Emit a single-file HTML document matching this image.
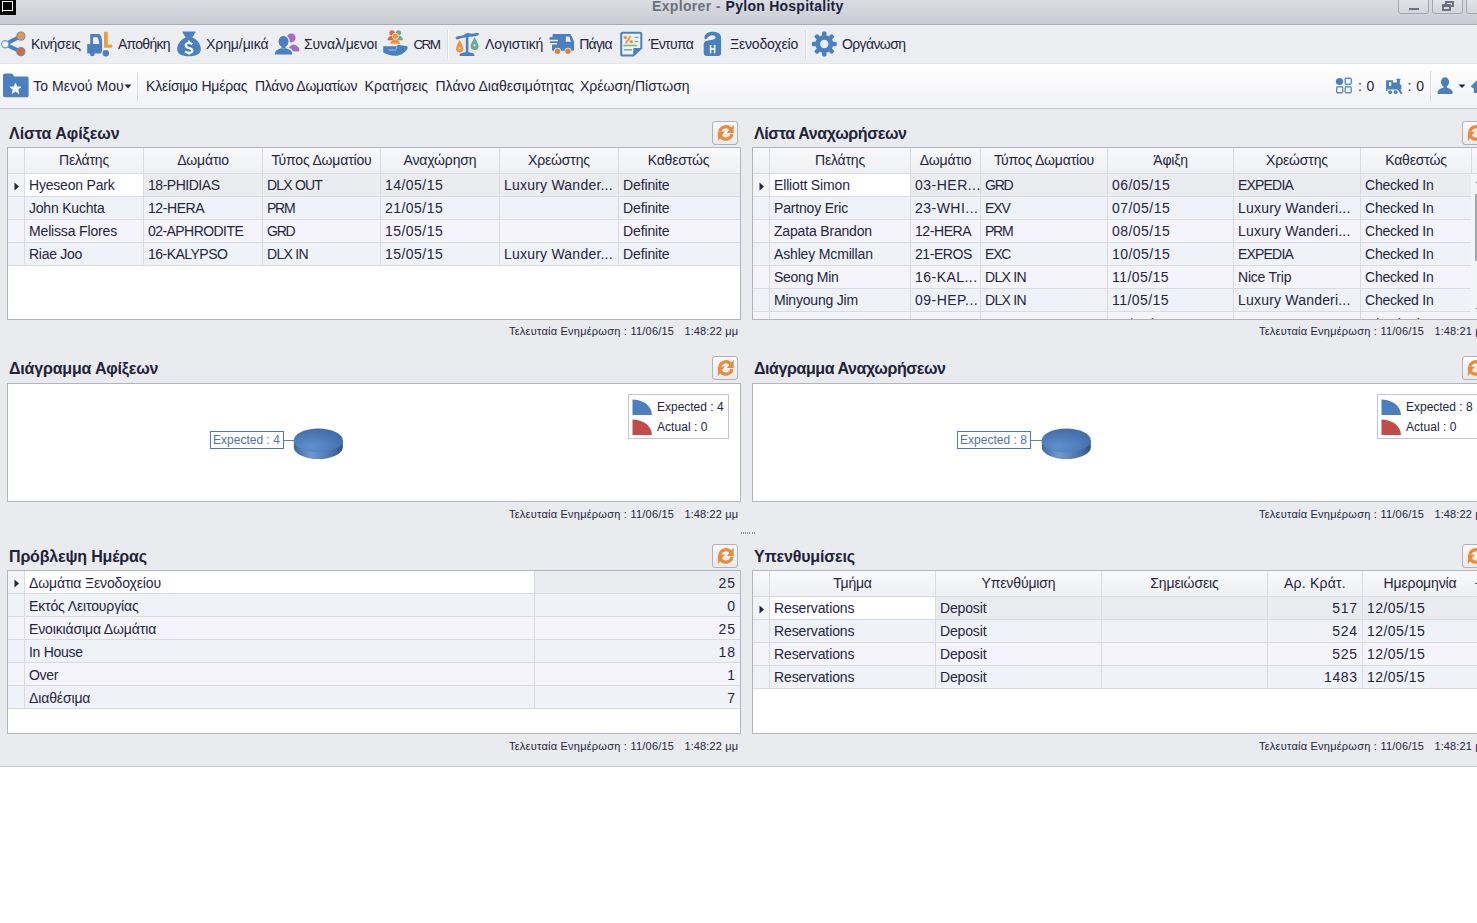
<!DOCTYPE html><html><head><meta charset="utf-8"><style>
html,body{margin:0;padding:0;width:1477px;height:923px;overflow:hidden;background:#ffffff;}
body{position:relative;font-family:"Liberation Sans", sans-serif;}
div,span,svg{position:absolute;}
.t{white-space:nowrap;}
</style></head><body>
<div style="left:0px;top:109px;width:1477px;height:657px;background:#eaebef;"></div>
<div style="left:0px;top:766px;width:1477px;height:1px;background:#c6c8ce;"></div>
<div style="left:0px;top:0px;width:1477px;height:24px;background:linear-gradient(#dadce2,#caccd3);"></div>
<div style="left:0px;top:24px;width:1477px;height:1px;background:#a9acb5;"></div>
<div style="left:0px;top:0px;width:16px;height:15px;background:#000;"></div>
<div style="left:2px;top:1px;width:9px;height:8px;border:1px solid #f4f4f4;"></div>
<div style="left:2px;top:11px;width:1px;height:1px;background:#f4f4f4;"></div>
<span class="t" style="left:652px;top:-0.85px;font-size:14px;line-height:14px;font-weight:700;color:#6d7080;letter-spacing:0.338px;">Explorer -</span>
<span class="t" style="left:725.6px;top:-0.85px;font-size:14px;line-height:14px;font-weight:700;color:#202040;letter-spacing:0.258px;">Pylon Hospitality</span>
<div style="left:1398px;top:-3px;width:31px;height:17px;box-sizing:border-box;border:1px solid #a3a6ae;border-radius:3px;background:linear-gradient(#e6e7eb,#d3d5da);"></div>
<div style="left:1432px;top:-3px;width:31px;height:17px;box-sizing:border-box;border:1px solid #a3a6ae;border-radius:3px;background:linear-gradient(#e6e7eb,#d3d5da);"></div>
<div style="left:1466px;top:-3px;width:31px;height:17px;box-sizing:border-box;border:1px solid #a3a6ae;border-radius:3px;background:linear-gradient(#e6e7eb,#d3d5da);"></div>
<div style="left:1409px;top:8px;width:10px;height:2px;background:#6c6f7c;"></div>
<div style="left:1445px;top:1px;width:9px;height:6px;box-sizing:border-box;border:2px solid #6c6f7c;border-top-width:2px;"></div>
<div style="left:1442px;top:4px;width:9px;height:7px;box-sizing:border-box;border:2px solid #6c6f7c;border-top-width:3px;background:#d9dbe1;"></div>
<div style="left:0px;top:25px;width:1477px;height:39px;background:#eceef2;"></div>
<div style="left:0px;top:63px;width:1477px;height:1px;background:#e4e6ea;"></div>
<svg style="left:0px;top:30px;" width="27" height="28" viewBox="0 0 27 28">
<line x1="5.2" y1="14.2" x2="20.9" y2="6.1" stroke="#4a80bf" stroke-width="3.8"/>
<line x1="5.2" y1="14.2" x2="20.9" y2="21.7" stroke="#4a80bf" stroke-width="3.8"/>
<circle cx="5.2" cy="14.2" r="3.6" fill="#f0f2f6" stroke="#6a9bd2" stroke-width="1.1"/>
<circle cx="20.9" cy="6.1" r="4.1" fill="#ef9440" stroke="#5a90cc" stroke-width="1"/>
<circle cx="20.9" cy="21.7" r="4.1" fill="#df653f" stroke="#5a90cc" stroke-width="1"/>
</svg>
<span class="t" style="left:31px;top:37.15px;font-size:14px;line-height:14px;font-weight:400;color:#25253f;letter-spacing:-0.283px;">Κινήσεις</span>
<svg style="left:86px;top:29px;" width="28" height="29" viewBox="0 0 28 29">
<path d="M4.2 6 c0 -0.6 0.4 -1 1 -1 h7 c1 0 1.8 0.5 2.3 1.3 c1 1.8 1.6 4.5 1.6 7.2 v8 l-1 3 h-13.3 c-0.4 0 -0.6 -0.2 -0.6 -0.6 v-8.4 c0 -0.4 0.2 -0.6 0.6 -0.6 h2.4 z" fill="#4a80bf"/>
<path d="M7 8.2 h4.5 c1 1.5 1.6 4 1.7 6.8 h-6.2 z" fill="#eceef2"/>
<circle cx="6.3" cy="25" r="2.3" fill="#4a80bf"/>
<path d="M18 4 c0 -0.7 0.5 -1.2 1.2 -1.2 h1.4 c0.7 0 1.2 0.5 1.2 1.2 v11.5 h3.2 c0.9 0 1.4 0.7 1.4 1.6 c0 0.9 -0.5 1.7 -1.4 1.7 h-6 c-0.6 0 -1 -0.4 -1 -1 z" fill="#f19a45"/>
<circle cx="19.8" cy="24.2" r="3.2" fill="#4a80bf"/>
</svg>
<span class="t" style="left:118px;top:37.15px;font-size:14px;line-height:14px;font-weight:400;color:#25253f;letter-spacing:-0.742px;">Αποθήκη</span>
<svg style="left:175px;top:29px;" width="28" height="29" viewBox="0 0 28 29">
<path d="M7.5 3.2 c-0.4 -0.5 0 -0.8 0.8 -0.8 h11.4 c0.8 0 1.2 0.3 0.8 0.8 l-3.2 5.3 c5 2 8.5 6.5 8.5 11.5 c0 5 -4.3 7.3 -11.8 7.3 c-7.5 0 -11.8 -2.3 -11.8 -7.3 c0 -5 3.5 -9.5 8.5 -11.5 z" fill="#4a80bf"/>
<path d="M17.3 15.3 c-0.8 -0.9 -1.9 -1.3 -3.3 -1.3 c-2 0 -3.3 0.9 -3.3 2.4 c0 1.6 1.5 2.1 3.3 2.5 c1.9 0.4 3.4 0.9 3.4 2.6 c0 1.5 -1.5 2.4 -3.4 2.4 c-1.6 0 -2.9 -0.5 -3.8 -1.4" fill="none" stroke="#fff" stroke-width="2.1"/>
<path d="M14 11.8 v2.4 M14 23.6 v2" stroke="#fff" stroke-width="2"/>
</svg>
<span class="t" style="left:206px;top:37.15px;font-size:14px;line-height:14px;font-weight:400;color:#25253f;letter-spacing:-0.082px;">Χρημ/μικά</span>
<svg style="left:272px;top:29px;" width="30" height="29" viewBox="0 0 30 29">
<circle cx="19.2" cy="8.8" r="4.4" fill="#a46bc4"/>
<path d="M16 22 c0.5 -4 2.5 -6 5.5 -6.5 c3.5 0.8 5.8 3 5.8 5.5 c0 1.2 -0.8 1.5 -2 1.5 z" fill="#a46bc4"/>
<ellipse cx="11.5" cy="12.5" rx="5.6" ry="6.1" fill="#4a80bf" stroke="#eceef2" stroke-width="1.4"/>
<path d="M2 25.5 c0 -4 2.5 -6 7 -7 h5 c4.5 1 7 3 7 7 c0 0.5 -0.3 0.8 -0.8 0.8 h-17.4 c-0.5 0 -0.8 -0.3 -0.8 -0.8 z" fill="#4a80bf" stroke="#eceef2" stroke-width="1.4"/>
<ellipse cx="11.5" cy="12.5" rx="4.8" ry="5.3" fill="#4a80bf"/>
<path d="M9.5 16 h4 v3 h-4 z" fill="#4a80bf"/>
</svg>
<span class="t" style="left:304px;top:37.15px;font-size:14px;line-height:14px;font-weight:400;color:#25253f;letter-spacing:-0.110px;">Συναλ/μενοι</span>
<svg style="left:380px;top:28px;" width="30" height="30" viewBox="0 0 30 30">
<circle cx="12" cy="4.8" r="2.6" fill="#e2653e"/>
<path d="M7.5 12.3 c0 -2.5 1.5 -4.3 4.5 -4.6 c1 0.5 1.5 1.5 1.5 3 v1.6 z" fill="#e2653e"/>
<circle cx="18.5" cy="4.8" r="2.6" fill="#6eaa8c"/>
<path d="M17 12.3 v-1.6 c0 -1.5 0.5 -2.5 1.5 -3 c3 0.3 4.5 2.1 4.5 4.6 z" fill="#6eaa8c"/>
<circle cx="15.3" cy="8.3" r="3.1" fill="#f0953f" stroke="#eceef2" stroke-width="0.8"/>
<path d="M10.5 15.8 c0 -2.5 1.8 -3.8 3.3 -4 h3 c1.5 0.2 3.2 1.5 3.2 4 z" fill="#f0953f"/>
<path d="M3.2 18.2 h12.5 c0.8 0 1.2 -0.3 1.5 -0.7 c0.5 -0.5 1 -0.7 2 -0.6 c2 0.2 4.5 0.6 6.8 1 c1.3 0.3 2 1 1.7 2 c-1 3 -6 7.9 -12.7 7.9 c-4.5 0 -8.5 -1.5 -11.8 -3.3 z" fill="#4a80bf"/>
<path d="M8.5 22 h6 c1.5 0 2.2 -0.8 2.2 -2 v-1.5" fill="none" stroke="#b9cde6" stroke-width="0.9"/>
</svg>
<span class="t" style="left:413.4px;top:37.57px;font-size:13.5px;line-height:13.5px;font-weight:400;color:#25253f;letter-spacing:-1.575px;">CRM</span>
<div style="left:447px;top:30px;width:1px;height:29px;background:#d9dbe0;"></div>
<div style="left:448px;top:30px;width:1px;height:29px;background:#f8f9fb;"></div>
<svg style="left:453px;top:29px;" width="29" height="29" viewBox="0 0 29 29">
<path d="M3 8 c2.5 -1 6 -1.3 8 -2 c1.5 -0.8 2 -2 3.5 -2 c1.5 0 2 0.7 4 0.7 c2.5 0 4.5 -0.7 6.5 -0.7 c1 0 1.2 1.8 0.2 2.2 c-3 1 -6 1.5 -9 1.6 c-4 0.4 -8 1.6 -12 2.6 c-1.3 0.3 -2 -2 -1.2 -2.4 z" fill="#4a80bf"/>
<rect x="12.8" y="7.5" width="2.6" height="17" fill="#4a80bf"/>
<path d="M6.5 26.2 c0 -1.8 3 -3 7.5 -3 c4.5 0 7.5 1.2 7.5 3 c0 0.6 -0.4 0.8 -1 0.8 h-13 c-0.6 0 -1 -0.2 -1 -0.8 z" fill="#4a80bf"/>
<path d="M6.7 10.8 c-1.5 3 -3.7 6.5 -3.7 9 a3.7 3.6 0 0 0 7.4 0 c0 -2.5 -2.2 -6 -3.7 -9 z" fill="#f0953f"/>
<path d="M21.6 8.3 c-1.5 3 -4 6.5 -4 9 a4 3.6 0 0 0 8 0 c0 -2.5 -2.5 -6 -4 -9 z" fill="#6eaa8c"/>
<circle cx="6.6" cy="19.2" r="1.1" fill="#eceef2"/>
<circle cx="21.5" cy="16.3" r="1.1" fill="#eceef2"/>
</svg>
<span class="t" style="left:485px;top:37.15px;font-size:14px;line-height:14px;font-weight:400;color:#25253f;letter-spacing:-0.116px;">Λογιστική</span>
<svg style="left:547px;top:29px;" width="30" height="29" viewBox="0 0 30 29">
<path d="M5.5 6.3 c0 -0.8 0.5 -1.3 1.3 -1.3 h15.5 c0.9 0 1.5 0.4 1.9 1.2 l2.3 5 c0.4 0.9 0.6 1.8 0.6 2.8 v6.5 c0 0.8 -0.4 1.2 -1.2 1.2 h-20.1 c-0.5 0 -0.8 -0.3 -0.8 -0.8 v-5.5 h5 v-1.3 h-6.5 c-0.8 0 -0.8 -1.9 0 -1.9 h7.5 v-1.4 h-8 c-0.9 0 -0.9 -2.5 0 -2.5 h2.5 z" fill="#4a80bf"/>
<path d="M18.8 7.4 h2.6 c0.5 0 0.8 0.2 1 0.6 l1.6 4.8 h-5.2 z" fill="#eceef2"/>
<circle cx="10.5" cy="22.3" r="3.5" fill="#eceef2"/>
<circle cx="21" cy="22.3" r="3.5" fill="#eceef2"/>
<circle cx="10.5" cy="22.3" r="2.7" fill="#d9843c"/>
<circle cx="21" cy="22.3" r="2.7" fill="#d9843c"/>
</svg>
<span class="t" style="left:579.3px;top:37.15px;font-size:14px;line-height:14px;font-weight:400;color:#25253f;letter-spacing:-0.805px;">Πάγια</span>
<svg style="left:617px;top:29px;" width="29" height="29" viewBox="0 0 29 29">
<path d="M4.2 5 c0 -0.8 0.6 -1.2 1.4 -1.2 h17.5 c0.8 0 1.2 0.5 1.2 1.2 v14 l-8 7.6 h-10.7 c-0.8 0 -1.4 -0.5 -1.4 -1.2 z" fill="#eef1f5" stroke="#4a80bf" stroke-width="2"/>
<path d="M16.3 26.6 v-6.3 c0 -0.8 0.5 -1.3 1.3 -1.3 h6.7 z" fill="#4a80bf"/>
<circle cx="8.3" cy="8.5" r="1.8" fill="#f0953f"/>
<circle cx="14.2" cy="12.8" r="1.8" fill="#f0953f"/>
<path d="M13.6 7 l-4.8 7.5" stroke="#f0953f" stroke-width="1.7"/>
<path d="M17.5 8.3 h3.8 M17.5 12.7 h3.8 M6.5 16.5 h13.5" stroke="#7fb39a" stroke-width="1.3"/>
<path d="M7 20.8 h8" stroke="#7fb39a" stroke-width="1.6"/>
</svg>
<span class="t" style="left:648.4px;top:37.15px;font-size:14px;line-height:14px;font-weight:400;color:#25253f;letter-spacing:-0.647px;">Έντυπα</span>
<svg style="left:700px;top:28px;" width="25" height="30" viewBox="0 0 25 30">
<path d="M4.5 10 C4 8 6 3.7 12 3.7 C18 3.5 21.1 6 21.1 10 V25 C21.1 27 20 28 18 28 H7 C5 28 3.7 27 3.7 25 V16.5 C3.7 14 5 13 8 12.5 C12 12 15.5 11.5 15.5 9.5 C15.5 8 14 7.3 12.5 7.3 C10 7.3 8 9 7 10.5 C6 11.8 4.8 11.5 4.5 10 Z" fill="#4a80bf"/>
<path d="M10.6 17 v8.2 M14.6 17 v8.2 M10.6 21 h4" stroke="#fff" stroke-width="1.5"/>
</svg>
<span class="t" style="left:730px;top:37.15px;font-size:14px;line-height:14px;font-weight:400;color:#25253f;letter-spacing:-0.181px;">Ξενοδοχείο</span>
<div style="left:805px;top:30px;width:1px;height:29px;background:#d9dbe0;"></div>
<div style="left:806px;top:30px;width:1px;height:29px;background:#f8f9fb;"></div>
<svg style="left:809px;top:29px;" width="30" height="29" viewBox="0 0 30 29">
<rect x="13.1" y="2.6" width="4.4" height="7" rx="1.3" fill="#4a80bf" transform="rotate(0 15.3 15)"/><rect x="13.1" y="2.6" width="4.4" height="7" rx="1.3" fill="#4a80bf" transform="rotate(45 15.3 15)"/><rect x="13.1" y="2.6" width="4.4" height="7" rx="1.3" fill="#4a80bf" transform="rotate(90 15.3 15)"/><rect x="13.1" y="2.6" width="4.4" height="7" rx="1.3" fill="#4a80bf" transform="rotate(135 15.3 15)"/><rect x="13.1" y="2.6" width="4.4" height="7" rx="1.3" fill="#4a80bf" transform="rotate(180 15.3 15)"/><rect x="13.1" y="2.6" width="4.4" height="7" rx="1.3" fill="#4a80bf" transform="rotate(225 15.3 15)"/><rect x="13.1" y="2.6" width="4.4" height="7" rx="1.3" fill="#4a80bf" transform="rotate(270 15.3 15)"/><rect x="13.1" y="2.6" width="4.4" height="7" rx="1.3" fill="#4a80bf" transform="rotate(315 15.3 15)"/>
<circle cx="15.3" cy="15" r="9" fill="#4a80bf"/>
<circle cx="15.3" cy="15" r="4.2" fill="#eceef2"/>
</svg>
<span class="t" style="left:842px;top:37.15px;font-size:14px;line-height:14px;font-weight:400;color:#25253f;letter-spacing:-0.616px;">Οργάνωση</span>
<div style="left:0px;top:64px;width:1477px;height:44px;background:linear-gradient(#ffffff,#fbfbfc 30%,#f1f2f5);"></div>
<div style="left:0px;top:108px;width:1477px;height:1px;background:#c6c8ce;"></div>
<svg style="left:2px;top:72px;" width="27" height="27" viewBox="0 0 27 27">
<path d="M1 3.5 c0 -1.2 0.8 -2 2 -2 h6 c1 0 1.5 0.5 2 1.2 l1.3 1.8 h12.5 c1 0 1.8 0.8 1.8 1.8 v17.2 c0 1 -0.8 1.8 -1.8 1.8 h-21.8 c-1.2 0 -2 -0.8 -2 -2 z" fill="#4a80bf"/>
<path d="M13.50 11.00 L14.97 14.78 L19.02 15.01 L15.88 17.57 L16.91 21.49 L13.50 19.30 L10.09 21.49 L11.12 17.57 L7.98 15.01 L12.03 14.78 Z" fill="#fff" stroke="#fff" stroke-width="0.6" stroke-linejoin="round"/>
</svg>
<span class="t" style="left:33.2px;top:79.15px;font-size:14px;line-height:14px;font-weight:400;color:#25253f;letter-spacing:0.043px;">Το Μενού Μου</span>
<svg style="left:124px;top:84px;" width="8" height="5" viewBox="0 0 8 5"><path d="M0.5 0.5 h7 l-3.5 4 z" fill="#222238"/></svg>
<div style="left:137px;top:72px;width:1px;height:29px;background:#d9dbe0;"></div>
<div style="left:138px;top:72px;width:1px;height:29px;background:#f8f9fb;"></div>
<span class="t" style="left:146px;top:79.15px;font-size:14px;line-height:14px;font-weight:400;color:#25253f;letter-spacing:-0.200px;">Κλείσιμο Ημέρας</span>
<span class="t" style="left:255px;top:79.15px;font-size:14px;line-height:14px;font-weight:400;color:#25253f;letter-spacing:-0.263px;">Πλάνο Δωματίων</span>
<span class="t" style="left:364.6px;top:79.15px;font-size:14px;line-height:14px;font-weight:400;color:#25253f;letter-spacing:-0.007px;">Κρατήσεις</span>
<span class="t" style="left:435.5px;top:79.15px;font-size:14px;line-height:14px;font-weight:400;color:#25253f;letter-spacing:0.007px;">Πλάνο Διαθεσιμότητας</span>
<span class="t" style="left:580px;top:79.15px;font-size:14px;line-height:14px;font-weight:400;color:#25253f;letter-spacing:0.020px;">Χρέωση/Πίστωση</span>
<svg style="left:1335px;top:77px;" width="18" height="18" viewBox="0 0 18 18">
<circle cx="4.5" cy="4.5" r="3.6" fill="#4a80bf"/>
<rect x="10.2" y="1.2" width="6" height="6" rx="1" fill="none" stroke="#5d8fca" stroke-width="1.4"/>
<rect x="1.7" y="9.7" width="6" height="6" rx="1" fill="none" stroke="#5d8fca" stroke-width="1.4"/>
<rect x="10.2" y="9.7" width="6" height="6" rx="1" fill="none" stroke="#5d8fca" stroke-width="1.4"/>
</svg>
<span class="t" style="left:1358px;top:79.15px;font-size:14px;line-height:14px;font-weight:400;color:#25253f;letter-spacing:0.361px;">: 0</span>
<svg style="left:1382px;top:74px;" width="24" height="24" viewBox="0 0 24 24">
<path d="M4 6.2 h7 v2.3 h4 v-2.3 h-0.6 v-1.4 h4 v1.4 h-0.6 v3.8 l1.6 1.6 v4 h-1.3 l2.3 3.2 v0.9 h-2 l-2.6 -4.1 h-10.5 v1.4 h-1.2 v-10.6 h-0.1 z" fill="#4a80bf"/>
<rect x="7" y="8.2" width="2.2" height="3.8" fill="#f7f8fa"/>
<circle cx="8.2" cy="18.2" r="1.9" fill="#4a80bf"/>
<circle cx="13.6" cy="18.2" r="1.9" fill="#4a80bf"/>
</svg>
<span class="t" style="left:1407.5px;top:79.15px;font-size:14px;line-height:14px;font-weight:400;color:#25253f;letter-spacing:0.461px;">: 0</span>
<div style="left:1430px;top:71px;width:1px;height:30px;background:#d9dbe0;"></div>
<div style="left:1431px;top:71px;width:1px;height:30px;background:#f8f9fb;"></div>
<svg style="left:1436px;top:77px;" width="18" height="18" viewBox="0 0 18 18">
<ellipse cx="9" cy="5" rx="4.1" ry="4.7" fill="#4a80bf"/>
<path d="M7.3 8 h3.6 v3.2 h-3.6 z" fill="#4a80bf"/>
<path d="M1.5 16 c0 -2.8 2 -4.3 5.8 -5.2 h3.6 c3.8 0.9 5.8 2.4 5.8 5.2 c0 0.8 -0.5 1.1 -1.2 1.1 h-12.8 c-0.7 0 -1.2 -0.3 -1.2 -1.1 z" fill="#4a80bf"/>
</svg>
<svg style="left:1458px;top:84px;" width="8" height="5" viewBox="0 0 8 5"><path d="M0.5 0.5 h7 l-3.5 3.5 z" fill="#222238"/></svg>
<svg style="left:1469px;top:79px;" width="8" height="16" viewBox="0 0 8 16"><path d="M1.6 7.6 L8 1.2 V14 H5.3 c-0.3 0 -0.5 -0.3 -0.5 -0.6 V9.6 Z" fill="#4a80bf"/></svg>
<span class="t" style="left:9px;top:126.46px;font-size:16px;line-height:16px;font-weight:700;color:#22223a;letter-spacing:-0.036px;">Λίστα Αφίξεων</span>
<div style="left:712px;top:121px;width:26px;height:24px;box-sizing:border-box;border:1px solid #b0b3bb;border-radius:3px;background:linear-gradient(#fbfbfc,#e9eaee);"></div>
<svg style="left:712px;top:121px;" width="26" height="24" viewBox="0 0 26 24">
<path d="M7.76 10.51 A6.2 6.2 0 0 1 19.17 8.8" fill="none" stroke="#ea8b3a" stroke-width="3.3"/>
<path d="M19.91 12.98 A6.2 6.2 0 0 1 8.43 15" fill="none" stroke="#ea8b3a" stroke-width="3.3"/>
<path d="M21.7 3.6 V12 H14.8 Z" fill="#ea8b3a"/>
<path d="M5.9 20.2 V10.6 H12.8 Z" fill="#ea8b3a"/>
</svg>
<div style="left:7px;top:147px;width:734px;height:173px;box-sizing:border-box;border:1px solid #b1b4bc;background:#fff;"></div>
<div style="left:8px;top:148px;width:732px;height:25px;background:linear-gradient(#f9f9fb,#eff0f3);"></div>
<div style="left:24px;top:148px;width:1px;height:25px;background:#d9dbe0;"></div>
<div style="left:143px;top:148px;width:1px;height:25px;background:#d9dbe0;"></div>
<div style="left:262px;top:148px;width:1px;height:25px;background:#d9dbe0;"></div>
<div style="left:380px;top:148px;width:1px;height:25px;background:#d9dbe0;"></div>
<div style="left:499px;top:148px;width:1px;height:25px;background:#d9dbe0;"></div>
<div style="left:618px;top:148px;width:1px;height:25px;background:#d9dbe0;"></div>
<div style="left:8px;top:173px;width:732px;height:1px;background:#d9dbe0;"></div>
<span class="t" style="left:-316.0px;width:800px;text-align:center;top:153.15px;font-size:14px;line-height:14px;font-weight:400;color:#25253f;letter-spacing:-0.171px;">Πελάτης</span>
<span class="t" style="left:-197.0px;width:800px;text-align:center;top:153.15px;font-size:14px;line-height:14px;font-weight:400;color:#25253f;letter-spacing:-0.177px;">Δωμάτιο</span>
<span class="t" style="left:-78.5px;width:800px;text-align:center;top:153.15px;font-size:14px;line-height:14px;font-weight:400;color:#25253f;letter-spacing:-0.181px;">Τύπος Δωματίου</span>
<span class="t" style="left:40.0px;width:800px;text-align:center;top:153.15px;font-size:14px;line-height:14px;font-weight:400;color:#25253f;letter-spacing:-0.159px;">Αναχώρηση</span>
<span class="t" style="left:159.0px;width:800px;text-align:center;top:153.15px;font-size:14px;line-height:14px;font-weight:400;color:#25253f;letter-spacing:-0.166px;">Χρεώστης</span>
<span class="t" style="left:278.5px;width:800px;text-align:center;top:153.15px;font-size:14px;line-height:14px;font-weight:400;color:#25253f;letter-spacing:-0.166px;">Καθεστώς</span>
<div style="left:8px;top:174px;width:16px;height:22px;background:#f3f4f6;"></div>
<div style="left:25px;top:174px;width:118px;height:22px;background:#ffffff;"></div>
<div style="left:144px;top:174px;width:596px;height:22px;background:#ebecef;"></div>
<div style="left:8px;top:196px;width:732px;height:1px;background:#d9dbe0;"></div>
<svg style="left:14px;top:182px;" width="6" height="9" viewBox="0 0 6 9"><path d="M0.5 0.5 l4.5 4 l-4.5 4 z" fill="#262640"/></svg>
<span class="t" style="left:29px;top:178.15px;font-size:14px;line-height:14px;font-weight:400;color:#25253f;letter-spacing:-0.205px;">Hyeseon Park</span>
<span class="t" style="left:148px;top:178.15px;font-size:14px;line-height:14px;font-weight:400;color:#25253f;letter-spacing:-0.473px;">18-PHIDIAS</span>
<span class="t" style="left:267px;top:178.15px;font-size:14px;line-height:14px;font-weight:400;color:#25253f;letter-spacing:-0.811px;">DLX OUT</span>
<span class="t" style="left:385px;top:178.15px;font-size:14px;line-height:14px;font-weight:400;color:#25253f;letter-spacing:0.456px;">14/05/15</span>
<span class="t" style="left:504px;top:178.15px;font-size:14px;line-height:14px;font-weight:400;color:#25253f;letter-spacing:0.220px;">Luxury Wander...</span>
<span class="t" style="left:623px;top:178.15px;font-size:14px;line-height:14px;font-weight:400;color:#25253f;letter-spacing:-0.125px;">Definite</span>
<div style="left:8px;top:197px;width:732px;height:22px;background:#eff2f8;"></div>
<div style="left:8px;top:219px;width:732px;height:1px;background:#d9dbe0;"></div>
<span class="t" style="left:29px;top:201.15px;font-size:14px;line-height:14px;font-weight:400;color:#25253f;letter-spacing:-0.213px;">John Kuchta</span>
<span class="t" style="left:148px;top:201.15px;font-size:14px;line-height:14px;font-weight:400;color:#25253f;letter-spacing:-0.429px;">12-HERA</span>
<span class="t" style="left:267px;top:201.15px;font-size:14px;line-height:14px;font-weight:400;color:#25253f;letter-spacing:-1.256px;">PRM</span>
<span class="t" style="left:385px;top:201.15px;font-size:14px;line-height:14px;font-weight:400;color:#25253f;letter-spacing:0.456px;">21/05/15</span>
<span class="t" style="left:623px;top:201.15px;font-size:14px;line-height:14px;font-weight:400;color:#25253f;letter-spacing:-0.125px;">Definite</span>
<div style="left:8px;top:220px;width:732px;height:22px;background:#f5f3fc;"></div>
<div style="left:8px;top:242px;width:732px;height:1px;background:#d9dbe0;"></div>
<span class="t" style="left:29px;top:224.15px;font-size:14px;line-height:14px;font-weight:400;color:#25253f;letter-spacing:-0.159px;">Melissa Flores</span>
<span class="t" style="left:148px;top:224.15px;font-size:14px;line-height:14px;font-weight:400;color:#25253f;letter-spacing:-0.559px;">02-APHRODITE</span>
<span class="t" style="left:267px;top:224.15px;font-size:14px;line-height:14px;font-weight:400;color:#25253f;letter-spacing:-1.256px;">GRD</span>
<span class="t" style="left:385px;top:224.15px;font-size:14px;line-height:14px;font-weight:400;color:#25253f;letter-spacing:0.456px;">15/05/15</span>
<span class="t" style="left:623px;top:224.15px;font-size:14px;line-height:14px;font-weight:400;color:#25253f;letter-spacing:-0.125px;">Definite</span>
<div style="left:8px;top:243px;width:732px;height:22px;background:#eff2f8;"></div>
<div style="left:8px;top:265px;width:732px;height:1px;background:#d9dbe0;"></div>
<span class="t" style="left:29px;top:247.15px;font-size:14px;line-height:14px;font-weight:400;color:#25253f;letter-spacing:-0.276px;">Riae Joo</span>
<span class="t" style="left:148px;top:247.15px;font-size:14px;line-height:14px;font-weight:400;color:#25253f;letter-spacing:-0.524px;">16-KALYPSO</span>
<span class="t" style="left:267px;top:247.15px;font-size:14px;line-height:14px;font-weight:400;color:#25253f;letter-spacing:-0.722px;">DLX IN</span>
<span class="t" style="left:385px;top:247.15px;font-size:14px;line-height:14px;font-weight:400;color:#25253f;letter-spacing:0.456px;">15/05/15</span>
<span class="t" style="left:504px;top:247.15px;font-size:14px;line-height:14px;font-weight:400;color:#25253f;letter-spacing:0.220px;">Luxury Wander...</span>
<span class="t" style="left:623px;top:247.15px;font-size:14px;line-height:14px;font-weight:400;color:#25253f;letter-spacing:-0.125px;">Definite</span>
<div style="left:24px;top:174px;width:1px;height:92px;background:#d9dbe0;"></div>
<div style="left:143px;top:174px;width:1px;height:92px;background:#d9dbe0;"></div>
<div style="left:262px;top:174px;width:1px;height:92px;background:#d9dbe0;"></div>
<div style="left:380px;top:174px;width:1px;height:92px;background:#d9dbe0;"></div>
<div style="left:499px;top:174px;width:1px;height:92px;background:#d9dbe0;"></div>
<div style="left:618px;top:174px;width:1px;height:92px;background:#d9dbe0;"></div>
<span class="t" style="left:509px;top:325.69px;font-size:11px;line-height:11px;font-weight:400;color:#25253f;letter-spacing:0.228px;">Τελευταία Ενημέρωση : 11/06/15</span>
<span class="t" style="left:684.4px;top:325.69px;font-size:11px;line-height:11px;font-weight:400;color:#25253f;letter-spacing:0.129px;">1:48:22 μμ</span>
<span class="t" style="left:754px;top:126.46px;font-size:16px;line-height:16px;font-weight:700;color:#22223a;letter-spacing:-0.385px;">Λίστα Αναχωρήσεων</span>
<div style="left:1462px;top:121px;width:26px;height:24px;box-sizing:border-box;border:1px solid #b0b3bb;border-radius:3px;background:linear-gradient(#fbfbfc,#e9eaee);"></div>
<svg style="left:1462px;top:121px;" width="26" height="24" viewBox="0 0 26 24">
<path d="M7.76 10.51 A6.2 6.2 0 0 1 19.17 8.8" fill="none" stroke="#ea8b3a" stroke-width="3.3"/>
<path d="M19.91 12.98 A6.2 6.2 0 0 1 8.43 15" fill="none" stroke="#ea8b3a" stroke-width="3.3"/>
<path d="M21.7 3.6 V12 H14.8 Z" fill="#ea8b3a"/>
<path d="M5.9 20.2 V10.6 H12.8 Z" fill="#ea8b3a"/>
</svg>
<div style="left:752px;top:147px;width:739px;height:173px;box-sizing:border-box;border:1px solid #b1b4bc;background:#fff;"></div>
<div style="left:753px;top:148px;width:737px;height:25px;background:linear-gradient(#f9f9fb,#eff0f3);"></div>
<div style="left:769px;top:148px;width:1px;height:25px;background:#d9dbe0;"></div>
<div style="left:910px;top:148px;width:1px;height:25px;background:#d9dbe0;"></div>
<div style="left:980px;top:148px;width:1px;height:25px;background:#d9dbe0;"></div>
<div style="left:1107px;top:148px;width:1px;height:25px;background:#d9dbe0;"></div>
<div style="left:1233px;top:148px;width:1px;height:25px;background:#d9dbe0;"></div>
<div style="left:1360px;top:148px;width:1px;height:25px;background:#d9dbe0;"></div>
<div style="left:1471px;top:148px;width:1px;height:25px;background:#d9dbe0;"></div>
<div style="left:753px;top:173px;width:737px;height:1px;background:#d9dbe0;"></div>
<span class="t" style="left:440.0px;width:800px;text-align:center;top:153.15px;font-size:14px;line-height:14px;font-weight:400;color:#25253f;letter-spacing:-0.171px;">Πελάτης</span>
<span class="t" style="left:545.5px;width:800px;text-align:center;top:153.15px;font-size:14px;line-height:14px;font-weight:400;color:#25253f;letter-spacing:-0.177px;">Δωμάτιο</span>
<span class="t" style="left:644.0px;width:800px;text-align:center;top:153.15px;font-size:14px;line-height:14px;font-weight:400;color:#25253f;letter-spacing:-0.181px;">Τύπος Δωματίου</span>
<span class="t" style="left:770.5px;width:800px;text-align:center;top:153.15px;font-size:14px;line-height:14px;font-weight:400;color:#25253f;letter-spacing:-0.224px;">Άφιξη</span>
<span class="t" style="left:897.0px;width:800px;text-align:center;top:153.15px;font-size:14px;line-height:14px;font-weight:400;color:#25253f;letter-spacing:-0.166px;">Χρεώστης</span>
<span class="t" style="left:1016.0px;width:800px;text-align:center;top:153.15px;font-size:14px;line-height:14px;font-weight:400;color:#25253f;letter-spacing:-0.166px;">Καθεστώς</span>
<div style="left:753px;top:174px;width:16px;height:22px;background:#f3f4f6;"></div>
<div style="left:770px;top:174px;width:140px;height:22px;background:#ffffff;"></div>
<div style="left:911px;top:174px;width:579px;height:22px;background:#ebecef;"></div>
<div style="left:753px;top:196px;width:737px;height:1px;background:#d9dbe0;"></div>
<svg style="left:759px;top:182px;" width="6" height="9" viewBox="0 0 6 9"><path d="M0.5 0.5 l4.5 4 l-4.5 4 z" fill="#262640"/></svg>
<span class="t" style="left:774px;top:178.15px;font-size:14px;line-height:14px;font-weight:400;color:#25253f;letter-spacing:-0.157px;">Elliott Simon</span>
<span class="t" style="left:915px;top:178.15px;font-size:14px;line-height:14px;font-weight:400;color:#25253f;letter-spacing:0.491px;">03-HER...</span>
<span class="t" style="left:985px;top:178.15px;font-size:14px;line-height:14px;font-weight:400;color:#25253f;letter-spacing:-1.256px;">GRD</span>
<span class="t" style="left:1112px;top:178.15px;font-size:14px;line-height:14px;font-weight:400;color:#25253f;letter-spacing:0.456px;">06/05/15</span>
<span class="t" style="left:1238px;top:178.15px;font-size:14px;line-height:14px;font-weight:400;color:#25253f;letter-spacing:-0.817px;">EXPEDIA</span>
<span class="t" style="left:1365px;top:178.15px;font-size:14px;line-height:14px;font-weight:400;color:#25253f;letter-spacing:-0.231px;">Checked In</span>
<div style="left:753px;top:197px;width:737px;height:22px;background:#eff2f8;"></div>
<div style="left:753px;top:219px;width:737px;height:1px;background:#d9dbe0;"></div>
<span class="t" style="left:774px;top:201.15px;font-size:14px;line-height:14px;font-weight:400;color:#25253f;letter-spacing:-0.178px;">Partnoy Eric</span>
<span class="t" style="left:915px;top:201.15px;font-size:14px;line-height:14px;font-weight:400;color:#25253f;letter-spacing:0.472px;">23-WHI...</span>
<span class="t" style="left:985px;top:201.15px;font-size:14px;line-height:14px;font-weight:400;color:#25253f;letter-spacing:-1.131px;">EXV</span>
<span class="t" style="left:1112px;top:201.15px;font-size:14px;line-height:14px;font-weight:400;color:#25253f;letter-spacing:0.456px;">07/05/15</span>
<span class="t" style="left:1238px;top:201.15px;font-size:14px;line-height:14px;font-weight:400;color:#25253f;letter-spacing:0.197px;">Luxury Wanderi...</span>
<span class="t" style="left:1365px;top:201.15px;font-size:14px;line-height:14px;font-weight:400;color:#25253f;letter-spacing:-0.231px;">Checked In</span>
<div style="left:753px;top:220px;width:737px;height:22px;background:#f5f3fc;"></div>
<div style="left:753px;top:242px;width:737px;height:1px;background:#d9dbe0;"></div>
<span class="t" style="left:774px;top:224.15px;font-size:14px;line-height:14px;font-weight:400;color:#25253f;letter-spacing:-0.177px;">Zapata Brandon</span>
<span class="t" style="left:915px;top:224.15px;font-size:14px;line-height:14px;font-weight:400;color:#25253f;letter-spacing:-0.429px;">12-HERA</span>
<span class="t" style="left:985px;top:224.15px;font-size:14px;line-height:14px;font-weight:400;color:#25253f;letter-spacing:-1.256px;">PRM</span>
<span class="t" style="left:1112px;top:224.15px;font-size:14px;line-height:14px;font-weight:400;color:#25253f;letter-spacing:0.456px;">08/05/15</span>
<span class="t" style="left:1238px;top:224.15px;font-size:14px;line-height:14px;font-weight:400;color:#25253f;letter-spacing:0.197px;">Luxury Wanderi...</span>
<span class="t" style="left:1365px;top:224.15px;font-size:14px;line-height:14px;font-weight:400;color:#25253f;letter-spacing:-0.231px;">Checked In</span>
<div style="left:753px;top:243px;width:737px;height:22px;background:#eff2f8;"></div>
<div style="left:753px;top:265px;width:737px;height:1px;background:#d9dbe0;"></div>
<span class="t" style="left:774px;top:247.15px;font-size:14px;line-height:14px;font-weight:400;color:#25253f;letter-spacing:-0.158px;">Ashley Mcmillan</span>
<span class="t" style="left:915px;top:247.15px;font-size:14px;line-height:14px;font-weight:400;color:#25253f;letter-spacing:-0.434px;">21-EROS</span>
<span class="t" style="left:985px;top:247.15px;font-size:14px;line-height:14px;font-weight:400;color:#25253f;letter-spacing:-1.162px;">EXC</span>
<span class="t" style="left:1112px;top:247.15px;font-size:14px;line-height:14px;font-weight:400;color:#25253f;letter-spacing:0.456px;">10/05/15</span>
<span class="t" style="left:1238px;top:247.15px;font-size:14px;line-height:14px;font-weight:400;color:#25253f;letter-spacing:-0.817px;">EXPEDIA</span>
<span class="t" style="left:1365px;top:247.15px;font-size:14px;line-height:14px;font-weight:400;color:#25253f;letter-spacing:-0.231px;">Checked In</span>
<div style="left:753px;top:266px;width:737px;height:22px;background:#f5f3fc;"></div>
<div style="left:753px;top:288px;width:737px;height:1px;background:#d9dbe0;"></div>
<span class="t" style="left:774px;top:270.15px;font-size:14px;line-height:14px;font-weight:400;color:#25253f;letter-spacing:-0.267px;">Seong Min</span>
<span class="t" style="left:915px;top:270.15px;font-size:14px;line-height:14px;font-weight:400;color:#25253f;letter-spacing:0.466px;">16-KAL...</span>
<span class="t" style="left:985px;top:270.15px;font-size:14px;line-height:14px;font-weight:400;color:#25253f;letter-spacing:-0.722px;">DLX IN</span>
<span class="t" style="left:1112px;top:270.15px;font-size:14px;line-height:14px;font-weight:400;color:#25253f;letter-spacing:0.447px;">11/05/15</span>
<span class="t" style="left:1238px;top:270.15px;font-size:14px;line-height:14px;font-weight:400;color:#25253f;letter-spacing:-0.220px;">Nice Trip</span>
<span class="t" style="left:1365px;top:270.15px;font-size:14px;line-height:14px;font-weight:400;color:#25253f;letter-spacing:-0.231px;">Checked In</span>
<div style="left:753px;top:289px;width:737px;height:22px;background:#eff2f8;"></div>
<div style="left:753px;top:311px;width:737px;height:1px;background:#d9dbe0;"></div>
<span class="t" style="left:774px;top:293.15px;font-size:14px;line-height:14px;font-weight:400;color:#25253f;letter-spacing:-0.201px;">Minyoung Jim</span>
<span class="t" style="left:915px;top:293.15px;font-size:14px;line-height:14px;font-weight:400;color:#25253f;letter-spacing:0.470px;">09-HEP...</span>
<span class="t" style="left:985px;top:293.15px;font-size:14px;line-height:14px;font-weight:400;color:#25253f;letter-spacing:-0.722px;">DLX IN</span>
<span class="t" style="left:1112px;top:293.15px;font-size:14px;line-height:14px;font-weight:400;color:#25253f;letter-spacing:0.447px;">11/05/15</span>
<span class="t" style="left:1238px;top:293.15px;font-size:14px;line-height:14px;font-weight:400;color:#25253f;letter-spacing:0.197px;">Luxury Wanderi...</span>
<span class="t" style="left:1365px;top:293.15px;font-size:14px;line-height:14px;font-weight:400;color:#25253f;letter-spacing:-0.231px;">Checked In</span>
<div style="left:753px;top:312px;width:737px;height:7px;background:#f5f3fc;"></div>
<div style="left:769px;top:174px;width:1px;height:145px;background:#d9dbe0;"></div>
<div style="left:910px;top:174px;width:1px;height:145px;background:#d9dbe0;"></div>
<div style="left:980px;top:174px;width:1px;height:145px;background:#d9dbe0;"></div>
<div style="left:1107px;top:174px;width:1px;height:145px;background:#d9dbe0;"></div>
<div style="left:1233px;top:174px;width:1px;height:145px;background:#d9dbe0;"></div>
<div style="left:1360px;top:174px;width:1px;height:145px;background:#d9dbe0;"></div>
<div style="left:1471px;top:174px;width:1px;height:145px;background:#d9dbe0;"></div>
<div style="left:1108px;top:312px;width:362px;height:7px;overflow:hidden;">
<span class="t" style="left:5px;top:4.95px;font-size:14px;line-height:14px;font-weight:400;color:#25253f;letter-spacing:0.447px;">11/05/15</span>
<span class="t" style="left:258px;top:4.95px;font-size:14px;line-height:14px;font-weight:400;color:#25253f;letter-spacing:-0.231px;">Checked In</span>
</div>
<div style="left:1471px;top:174px;width:6px;height:145px;background:#f3f4f6;"></div>
<div style="left:1475px;top:194px;width:2px;height:67px;background:#a3a6ae;"></div>
<div style="left:1475px;top:182px;width:2px;height:1px;background:#a3a6ae;"></div>
<div style="left:1475px;top:308px;width:2px;height:1px;background:#a3a6ae;"></div>
<span class="t" style="left:1259px;top:325.69px;font-size:11px;line-height:11px;font-weight:400;color:#25253f;letter-spacing:0.228px;">Τελευταία Ενημέρωση : 11/06/15</span>
<span class="t" style="left:1434.4px;top:325.69px;font-size:11px;line-height:11px;font-weight:400;color:#25253f;letter-spacing:0.129px;">1:48:21 μμ</span>
<span class="t" style="left:9px;top:361.46px;font-size:16px;line-height:16px;font-weight:700;color:#22223a;letter-spacing:-0.179px;">Διάγραμμα Αφίξεων</span>
<div style="left:712px;top:356px;width:26px;height:24px;box-sizing:border-box;border:1px solid #b0b3bb;border-radius:3px;background:linear-gradient(#fbfbfc,#e9eaee);"></div>
<svg style="left:712px;top:356px;" width="26" height="24" viewBox="0 0 26 24">
<path d="M7.76 10.51 A6.2 6.2 0 0 1 19.17 8.8" fill="none" stroke="#ea8b3a" stroke-width="3.3"/>
<path d="M19.91 12.98 A6.2 6.2 0 0 1 8.43 15" fill="none" stroke="#ea8b3a" stroke-width="3.3"/>
<path d="M21.7 3.6 V12 H14.8 Z" fill="#ea8b3a"/>
<path d="M5.9 20.2 V10.6 H12.8 Z" fill="#ea8b3a"/>
</svg>
<div style="left:7px;top:383px;width:734px;height:119px;box-sizing:border-box;border:1px solid #b1b4bc;background:#fff;"></div>
<div style="left:210px;top:431px;width:74px;height:18px;box-sizing:border-box;border:1px solid #4f79ad;background:#fff;"></div>
<span class="t" style="left:213px;top:433.84px;font-size:12px;line-height:12px;font-weight:400;color:#4f73a3;letter-spacing:0.026px;">Expected : 4</span>
<div style="left:284px;top:440px;width:12px;height:1px;background:#5b82b5;"></div>
<svg style="left:293px;top:427px;" width="51" height="34" viewBox="0 0 51 34">
<defs>
<linearGradient id="side" x1="0" x2="1" y1="0" y2="0">
<stop offset="0" stop-color="#3f6aa0"/><stop offset="0.35" stop-color="#6e9ad0"/><stop offset="0.75" stop-color="#4a76ad"/><stop offset="1" stop-color="#2c5183"/>
</linearGradient>
<radialGradient id="top" cx="0.35" cy="0.75" r="0.8">
<stop offset="0" stop-color="#5f90cf"/><stop offset="1" stop-color="#3f6ba6"/>
</radialGradient>
</defs>
<path d="M0.8 13.4 v6.8 a24.5 11.9 0 0 0 49 0 v-6.8 z" fill="url(#side)"/>
<ellipse cx="25.3" cy="13.4" rx="24.5" ry="11.9" fill="url(#top)"/>
</svg>
<div style="left:628px;top:394px;width:101px;height:45px;box-sizing:border-box;border:1px solid #c4c6cc;background:#fff;"></div>
<svg style="left:632px;top:399px;" width="21" height="17" viewBox="0 0 21 17"><path d="M0.5 0.5 c9 0 19 5 19.5 15.5 h-19.5 z" fill="#4a7ebf"/></svg>
<svg style="left:632px;top:419px;" width="21" height="17" viewBox="0 0 21 17"><path d="M0.5 0.5 c9 0 19 5 19.5 15.5 h-19.5 z" fill="#c04b4b"/></svg>
<span class="t" style="left:657px;top:400.84px;font-size:12px;line-height:12px;font-weight:400;color:#25253f;letter-spacing:-0.011px;">Expected : 4</span>
<span class="t" style="left:657px;top:420.84px;font-size:12px;line-height:12px;font-weight:400;color:#25253f;letter-spacing:0.041px;">Actual : 0</span>
<span class="t" style="left:509px;top:508.69px;font-size:11px;line-height:11px;font-weight:400;color:#25253f;letter-spacing:0.228px;">Τελευταία Ενημέρωση : 11/06/15</span>
<span class="t" style="left:684.4px;top:508.69px;font-size:11px;line-height:11px;font-weight:400;color:#25253f;letter-spacing:0.129px;">1:48:22 μμ</span>
<span class="t" style="left:754px;top:361.46px;font-size:16px;line-height:16px;font-weight:700;color:#22223a;letter-spacing:-0.420px;">Διάγραμμα Αναχωρήσεων</span>
<div style="left:1462px;top:356px;width:26px;height:24px;box-sizing:border-box;border:1px solid #b0b3bb;border-radius:3px;background:linear-gradient(#fbfbfc,#e9eaee);"></div>
<svg style="left:1462px;top:356px;" width="26" height="24" viewBox="0 0 26 24">
<path d="M7.76 10.51 A6.2 6.2 0 0 1 19.17 8.8" fill="none" stroke="#ea8b3a" stroke-width="3.3"/>
<path d="M19.91 12.98 A6.2 6.2 0 0 1 8.43 15" fill="none" stroke="#ea8b3a" stroke-width="3.3"/>
<path d="M21.7 3.6 V12 H14.8 Z" fill="#ea8b3a"/>
<path d="M5.9 20.2 V10.6 H12.8 Z" fill="#ea8b3a"/>
</svg>
<div style="left:752px;top:383px;width:739px;height:119px;box-sizing:border-box;border:1px solid #b1b4bc;background:#fff;"></div>
<div style="left:957px;top:431px;width:74px;height:18px;box-sizing:border-box;border:1px solid #4f79ad;background:#fff;"></div>
<span class="t" style="left:960px;top:433.84px;font-size:12px;line-height:12px;font-weight:400;color:#4f73a3;letter-spacing:0.026px;">Expected : 8</span>
<div style="left:1031px;top:440px;width:13px;height:1px;background:#5b82b5;"></div>
<svg style="left:1041px;top:427px;" width="51" height="34" viewBox="0 0 51 34">
<defs>
<linearGradient id="side" x1="0" x2="1" y1="0" y2="0">
<stop offset="0" stop-color="#3f6aa0"/><stop offset="0.35" stop-color="#6e9ad0"/><stop offset="0.75" stop-color="#4a76ad"/><stop offset="1" stop-color="#2c5183"/>
</linearGradient>
<radialGradient id="top" cx="0.35" cy="0.75" r="0.8">
<stop offset="0" stop-color="#5f90cf"/><stop offset="1" stop-color="#3f6ba6"/>
</radialGradient>
</defs>
<path d="M0.8 13.4 v6.8 a24.5 11.9 0 0 0 49 0 v-6.8 z" fill="url(#side)"/>
<ellipse cx="25.3" cy="13.4" rx="24.5" ry="11.9" fill="url(#top)"/>
</svg>
<div style="left:1377px;top:394px;width:101px;height:45px;box-sizing:border-box;border:1px solid #c4c6cc;background:#fff;"></div>
<svg style="left:1381px;top:399px;" width="21" height="17" viewBox="0 0 21 17"><path d="M0.5 0.5 c9 0 19 5 19.5 15.5 h-19.5 z" fill="#4a7ebf"/></svg>
<svg style="left:1381px;top:419px;" width="21" height="17" viewBox="0 0 21 17"><path d="M0.5 0.5 c9 0 19 5 19.5 15.5 h-19.5 z" fill="#c04b4b"/></svg>
<span class="t" style="left:1406px;top:400.84px;font-size:12px;line-height:12px;font-weight:400;color:#25253f;letter-spacing:-0.011px;">Expected : 8</span>
<span class="t" style="left:1406px;top:420.84px;font-size:12px;line-height:12px;font-weight:400;color:#25253f;letter-spacing:0.041px;">Actual : 0</span>
<span class="t" style="left:1259px;top:508.69px;font-size:11px;line-height:11px;font-weight:400;color:#25253f;letter-spacing:0.228px;">Τελευταία Ενημέρωση : 11/06/15</span>
<span class="t" style="left:1434.4px;top:508.69px;font-size:11px;line-height:11px;font-weight:400;color:#25253f;letter-spacing:0.129px;">1:48:22 μμ</span>
<div style="left:741px;top:532px;width:1px;height:2px;background:#8f929c;"></div>
<div style="left:743px;top:532px;width:1px;height:2px;background:#8f929c;"></div>
<div style="left:745px;top:532px;width:1px;height:2px;background:#8f929c;"></div>
<div style="left:747px;top:532px;width:1px;height:2px;background:#8f929c;"></div>
<div style="left:749px;top:532px;width:1px;height:2px;background:#8f929c;"></div>
<div style="left:752px;top:532px;width:1px;height:2px;background:#8f929c;"></div>
<div style="left:754px;top:532px;width:1px;height:2px;background:#8f929c;"></div>
<span class="t" style="left:9px;top:549.46px;font-size:16px;line-height:16px;font-weight:700;color:#22223a;letter-spacing:-0.170px;">Πρόβλεψη Ημέρας</span>
<div style="left:712px;top:544px;width:26px;height:24px;box-sizing:border-box;border:1px solid #b0b3bb;border-radius:3px;background:linear-gradient(#fbfbfc,#e9eaee);"></div>
<svg style="left:712px;top:544px;" width="26" height="24" viewBox="0 0 26 24">
<path d="M7.76 10.51 A6.2 6.2 0 0 1 19.17 8.8" fill="none" stroke="#ea8b3a" stroke-width="3.3"/>
<path d="M19.91 12.98 A6.2 6.2 0 0 1 8.43 15" fill="none" stroke="#ea8b3a" stroke-width="3.3"/>
<path d="M21.7 3.6 V12 H14.8 Z" fill="#ea8b3a"/>
<path d="M5.9 20.2 V10.6 H12.8 Z" fill="#ea8b3a"/>
</svg>
<div style="left:7px;top:570px;width:734px;height:164px;box-sizing:border-box;border:1px solid #b1b4bc;background:#fff;"></div>
<div style="left:8px;top:571px;width:16px;height:22px;background:#f3f4f6;"></div>
<div style="left:25px;top:571px;width:509px;height:22px;background:#ffffff;"></div>
<div style="left:535px;top:571px;width:205px;height:22px;background:#ebecef;"></div>
<div style="left:8px;top:593px;width:732px;height:1px;background:#d9dbe0;"></div>
<svg style="left:14px;top:579px;" width="6" height="9" viewBox="0 0 6 9"><path d="M0.5 0.5 l4.5 4 l-4.5 4 z" fill="#262640"/></svg>
<span class="t" style="left:29px;top:576.15px;font-size:14px;line-height:14px;font-weight:400;color:#25253f;letter-spacing:-0.139px;">Δωμάτια Ξενοδοχείου</span>
<span class="t" style="right:741.09px;top:576.15px;font-size:14px;line-height:14px;font-weight:400;color:#25253f;letter-spacing:0.912px;">25</span>
<div style="left:8px;top:594px;width:732px;height:22px;background:#eff2f8;"></div>
<div style="left:8px;top:616px;width:732px;height:1px;background:#d9dbe0;"></div>
<span class="t" style="left:29px;top:599.15px;font-size:14px;line-height:14px;font-weight:400;color:#25253f;letter-spacing:-0.140px;">Εκτός Λειτουργίας</span>
<span class="t" style="right:741.75px;top:599.15px;font-size:14px;line-height:14px;font-weight:400;color:#25253f;letter-spacing:0.250px;">0</span>
<div style="left:8px;top:617px;width:732px;height:22px;background:#f5f3fc;"></div>
<div style="left:8px;top:639px;width:732px;height:1px;background:#d9dbe0;"></div>
<span class="t" style="left:29px;top:622.15px;font-size:14px;line-height:14px;font-weight:400;color:#25253f;letter-spacing:-0.134px;">Ενοικιάσιμα Δωμάτια</span>
<span class="t" style="right:741.09px;top:622.15px;font-size:14px;line-height:14px;font-weight:400;color:#25253f;letter-spacing:0.912px;">25</span>
<div style="left:8px;top:640px;width:732px;height:22px;background:#eff2f8;"></div>
<div style="left:8px;top:662px;width:732px;height:1px;background:#d9dbe0;"></div>
<span class="t" style="left:29px;top:645.15px;font-size:14px;line-height:14px;font-weight:400;color:#25253f;letter-spacing:-0.280px;">In House</span>
<span class="t" style="right:741.09px;top:645.15px;font-size:14px;line-height:14px;font-weight:400;color:#25253f;letter-spacing:0.912px;">18</span>
<div style="left:8px;top:663px;width:732px;height:22px;background:#f5f3fc;"></div>
<div style="left:8px;top:685px;width:732px;height:1px;background:#d9dbe0;"></div>
<span class="t" style="left:29px;top:668.15px;font-size:14px;line-height:14px;font-weight:400;color:#25253f;letter-spacing:-0.298px;">Over</span>
<span class="t" style="right:741.75px;top:668.15px;font-size:14px;line-height:14px;font-weight:400;color:#25253f;letter-spacing:0.250px;">1</span>
<div style="left:8px;top:686px;width:732px;height:22px;background:#eff2f8;"></div>
<div style="left:8px;top:708px;width:732px;height:1px;background:#d9dbe0;"></div>
<span class="t" style="left:29px;top:691.15px;font-size:14px;line-height:14px;font-weight:400;color:#25253f;letter-spacing:-0.134px;">Διαθέσιμα</span>
<span class="t" style="right:741.75px;top:691.15px;font-size:14px;line-height:14px;font-weight:400;color:#25253f;letter-spacing:0.250px;">7</span>
<div style="left:24px;top:571px;width:1px;height:138px;background:#d9dbe0;"></div>
<div style="left:534px;top:571px;width:1px;height:138px;background:#d9dbe0;"></div>
<span class="t" style="left:509px;top:740.69px;font-size:11px;line-height:11px;font-weight:400;color:#25253f;letter-spacing:0.228px;">Τελευταία Ενημέρωση : 11/06/15</span>
<span class="t" style="left:684.4px;top:740.69px;font-size:11px;line-height:11px;font-weight:400;color:#25253f;letter-spacing:0.129px;">1:48:22 μμ</span>
<span class="t" style="left:754px;top:549.46px;font-size:16px;line-height:16px;font-weight:700;color:#22223a;letter-spacing:-0.175px;">Υπενθυμίσεις</span>
<div style="left:1462px;top:544px;width:26px;height:24px;box-sizing:border-box;border:1px solid #b0b3bb;border-radius:3px;background:linear-gradient(#fbfbfc,#e9eaee);"></div>
<svg style="left:1462px;top:544px;" width="26" height="24" viewBox="0 0 26 24">
<path d="M7.76 10.51 A6.2 6.2 0 0 1 19.17 8.8" fill="none" stroke="#ea8b3a" stroke-width="3.3"/>
<path d="M19.91 12.98 A6.2 6.2 0 0 1 8.43 15" fill="none" stroke="#ea8b3a" stroke-width="3.3"/>
<path d="M21.7 3.6 V12 H14.8 Z" fill="#ea8b3a"/>
<path d="M5.9 20.2 V10.6 H12.8 Z" fill="#ea8b3a"/>
</svg>
<div style="left:752px;top:570px;width:739px;height:164px;box-sizing:border-box;border:1px solid #b1b4bc;background:#fff;"></div>
<div style="left:753px;top:571px;width:737px;height:25px;background:linear-gradient(#f9f9fb,#eff0f3);"></div>
<div style="left:769px;top:571px;width:1px;height:25px;background:#d9dbe0;"></div>
<div style="left:935px;top:571px;width:1px;height:25px;background:#d9dbe0;"></div>
<div style="left:1101px;top:571px;width:1px;height:25px;background:#d9dbe0;"></div>
<div style="left:1267px;top:571px;width:1px;height:25px;background:#d9dbe0;"></div>
<div style="left:1362px;top:571px;width:1px;height:25px;background:#d9dbe0;"></div>
<div style="left:1477px;top:571px;width:1px;height:25px;background:#d9dbe0;"></div>
<div style="left:753px;top:596px;width:737px;height:1px;background:#d9dbe0;"></div>
<span class="t" style="left:452.5px;width:800px;text-align:center;top:576.15px;font-size:14px;line-height:14px;font-weight:400;color:#25253f;letter-spacing:-0.248px;">Τμήμα</span>
<span class="t" style="left:618.5px;width:800px;text-align:center;top:576.15px;font-size:14px;line-height:14px;font-weight:400;color:#25253f;letter-spacing:-0.135px;">Υπενθύμιση</span>
<span class="t" style="left:784.5px;width:800px;text-align:center;top:576.15px;font-size:14px;line-height:14px;font-weight:400;color:#25253f;letter-spacing:-0.124px;">Σημειώσεις</span>
<span class="t" style="left:915.0px;width:800px;text-align:center;top:576.15px;font-size:14px;line-height:14px;font-weight:400;color:#25253f;letter-spacing:0.218px;">Αρ. Κράτ.</span>
<span class="t" style="left:1020.0px;width:800px;text-align:center;top:576.15px;font-size:14px;line-height:14px;font-weight:400;color:#25253f;letter-spacing:-0.133px;">Ημερομηνία</span>
<div style="left:753px;top:597px;width:16px;height:22px;background:#f3f4f6;"></div>
<div style="left:770px;top:597px;width:165px;height:22px;background:#ffffff;"></div>
<div style="left:936px;top:597px;width:554px;height:22px;background:#ebecef;"></div>
<div style="left:753px;top:619px;width:737px;height:1px;background:#d9dbe0;"></div>
<svg style="left:759px;top:605px;" width="6" height="9" viewBox="0 0 6 9"><path d="M0.5 0.5 l4.5 4 l-4.5 4 z" fill="#262640"/></svg>
<span class="t" style="left:774px;top:601.15px;font-size:14px;line-height:14px;font-weight:400;color:#25253f;letter-spacing:-0.108px;">Reservations</span>
<span class="t" style="left:940px;top:601.15px;font-size:14px;line-height:14px;font-weight:400;color:#25253f;letter-spacing:-0.159px;">Deposit</span>
<span class="t" style="right:119.32px;top:601.15px;font-size:14px;line-height:14px;font-weight:400;color:#25253f;letter-spacing:0.684px;">517</span>
<span class="t" style="left:1367px;top:601.15px;font-size:14px;line-height:14px;font-weight:400;color:#25253f;letter-spacing:0.456px;">12/05/15</span>
<div style="left:753px;top:620px;width:737px;height:22px;background:#eff2f8;"></div>
<div style="left:753px;top:642px;width:737px;height:1px;background:#d9dbe0;"></div>
<span class="t" style="left:774px;top:624.15px;font-size:14px;line-height:14px;font-weight:400;color:#25253f;letter-spacing:-0.108px;">Reservations</span>
<span class="t" style="left:940px;top:624.15px;font-size:14px;line-height:14px;font-weight:400;color:#25253f;letter-spacing:-0.159px;">Deposit</span>
<span class="t" style="right:119.32px;top:624.15px;font-size:14px;line-height:14px;font-weight:400;color:#25253f;letter-spacing:0.684px;">524</span>
<span class="t" style="left:1367px;top:624.15px;font-size:14px;line-height:14px;font-weight:400;color:#25253f;letter-spacing:0.456px;">12/05/15</span>
<div style="left:753px;top:643px;width:737px;height:22px;background:#f5f3fc;"></div>
<div style="left:753px;top:665px;width:737px;height:1px;background:#d9dbe0;"></div>
<span class="t" style="left:774px;top:647.15px;font-size:14px;line-height:14px;font-weight:400;color:#25253f;letter-spacing:-0.108px;">Reservations</span>
<span class="t" style="left:940px;top:647.15px;font-size:14px;line-height:14px;font-weight:400;color:#25253f;letter-spacing:-0.159px;">Deposit</span>
<span class="t" style="right:119.32px;top:647.15px;font-size:14px;line-height:14px;font-weight:400;color:#25253f;letter-spacing:0.684px;">525</span>
<span class="t" style="left:1367px;top:647.15px;font-size:14px;line-height:14px;font-weight:400;color:#25253f;letter-spacing:0.456px;">12/05/15</span>
<div style="left:753px;top:666px;width:737px;height:22px;background:#eff2f8;"></div>
<div style="left:753px;top:688px;width:737px;height:1px;background:#d9dbe0;"></div>
<span class="t" style="left:774px;top:670.15px;font-size:14px;line-height:14px;font-weight:400;color:#25253f;letter-spacing:-0.108px;">Reservations</span>
<span class="t" style="left:940px;top:670.15px;font-size:14px;line-height:14px;font-weight:400;color:#25253f;letter-spacing:-0.159px;">Deposit</span>
<span class="t" style="right:119.39px;top:670.15px;font-size:14px;line-height:14px;font-weight:400;color:#25253f;letter-spacing:0.608px;">1483</span>
<span class="t" style="left:1367px;top:670.15px;font-size:14px;line-height:14px;font-weight:400;color:#25253f;letter-spacing:0.456px;">12/05/15</span>
<div style="left:769px;top:597px;width:1px;height:92px;background:#d9dbe0;"></div>
<div style="left:935px;top:597px;width:1px;height:92px;background:#d9dbe0;"></div>
<div style="left:1101px;top:597px;width:1px;height:92px;background:#d9dbe0;"></div>
<div style="left:1267px;top:597px;width:1px;height:92px;background:#d9dbe0;"></div>
<div style="left:1362px;top:597px;width:1px;height:92px;background:#d9dbe0;"></div>
<div style="left:1477px;top:597px;width:1px;height:92px;background:#d9dbe0;"></div>
<div style="left:1475px;top:583px;width:2px;height:1px;background:#55586a;"></div>
<span class="t" style="left:1259px;top:740.69px;font-size:11px;line-height:11px;font-weight:400;color:#25253f;letter-spacing:0.228px;">Τελευταία Ενημέρωση : 11/06/15</span>
<span class="t" style="left:1434.4px;top:740.69px;font-size:11px;line-height:11px;font-weight:400;color:#25253f;letter-spacing:0.129px;">1:48:21 μμ</span>
</body></html>
